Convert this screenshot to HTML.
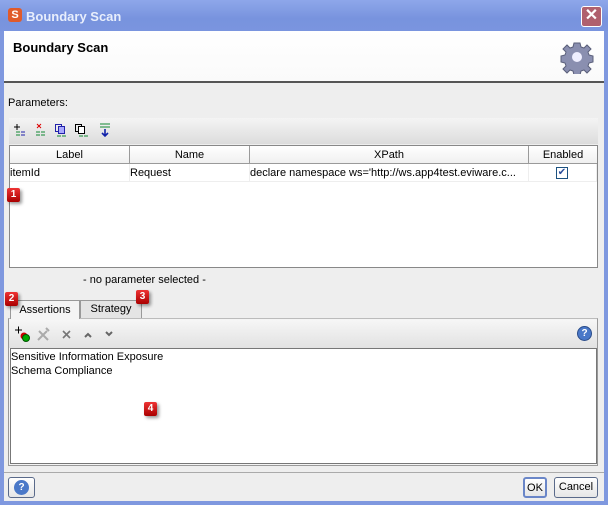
<!DOCTYPE html>
<html><head><meta charset="utf-8"><style>
*{margin:0;padding:0;box-sizing:border-box}
body{width:608px;height:505px;position:relative;overflow:hidden;font-family:"Liberation Sans",sans-serif;font-size:11px;color:#000;background:#7f98df}
.a{position:absolute}
.badge{position:absolute;width:13px;height:14px;background:linear-gradient(#e33,#a00);color:#fff;font-weight:bold;font-size:10px;text-align:center;line-height:14px;border-radius:2px;box-shadow:2px 2px 3px rgba(0,0,0,.4)}
.th{position:absolute;top:0;height:18px;line-height:18px;text-align:center;border-right:1px solid #9a9a9a;background:linear-gradient(#fff,#f0f0f0);border-bottom:1px solid #9a9a9a}
.td{position:absolute;top:18px;height:18px;line-height:18px;border-right:1px solid #eee;border-bottom:1px solid #eee;white-space:nowrap;overflow:hidden}
.btn{position:absolute;border:1px solid #5a6a8a;border-radius:3px;background:linear-gradient(#fff,#e6e6e6);text-align:center;line-height:18px}
</style></head><body>
<div class="a" style="left:0;top:0;width:608px;height:31px;background:linear-gradient(#8ea7ea,#7893de 60%,#7a95df)"></div>
<div class="a" style="left:8px;top:8px;width:14px;height:14px;background:#e05a2a;border-radius:3px;color:#fff;font-weight:bold;font-size:11px;line-height:14px;text-align:center">S</div>
<div class="a" style="left:26px;top:9px;color:#e8eefc;font-weight:bold;font-size:13px">Boundary Scan</div>
<div class="a" style="left:581px;top:6px;width:21px;height:21px;background:#b0606e;border:1px solid #fff;border-radius:3px;color:#fff;font-size:16px;line-height:18px;text-align:center;font-weight:bold">✕</div>
<div class="a" style="left:4px;top:31px;width:600px;height:470px;background:#eeeeee"></div>
<div class="a" style="left:4px;top:31px;width:600px;height:51px;background:linear-gradient(#fff,#fafafa)"></div>
<div class="a" style="left:4px;top:81px;width:600px;height:2px;background:#555"></div>
<div class="a" style="left:13px;top:40px;font-weight:bold;font-size:13px">Boundary Scan</div>
<svg class="a" style="left:560px;top:40px" width="34" height="34" viewBox="0 0 34 34"><g fill="#8a8fb0" stroke="#5a5f7a" stroke-width="1"><path d="M14 3h6l1 4 3 1 3-3 4 4-3 3 1 3 4 1v6l-4 1-1 3 3 3-4 4-3-3-3 1-1 4h-6l-1-4-3-1-3 3-4-4 3-3-1-3-4-1v-6l4-1 1-3-3-3 4-4 3 3 3-1z"/></g><circle cx="17" cy="17" r="5" fill="#eef"/></svg>
<div class="a" style="left:8px;top:97px">Parameters:</div>
<div class="a" style="left:9px;top:118px;width:589px;height:26px;background:linear-gradient(#f4f4f4,#dcdcdc)"></div>
<svg class="a" style="left:12px;top:122px" width="110" height="16" viewBox="0 0 110 16">
<g stroke-width="1">
<path d="M2 5h6M5 2v6" stroke="#000"/><path d="M4 10h4M9 10h4M4 13h4M9 13h4" stroke="#183"/><path d="M9 10h4M9 13h4" stroke="#22a"/>
<path d="M25 2l4 4M29 2l-4 4" stroke="#d00"/><path d="M24 10h4M29 10h4M24 13h4M29 13h4" stroke="#183"/>
<rect x="43.5" y="2.5" width="6" height="7" fill="none" stroke="#22a"/><rect x="46.5" y="4.5" width="6" height="7" fill="#aaf" stroke="#22a"/><path d="M45 14h4M50 14h4" stroke="#183"/>
<rect x="63.5" y="2.5" width="6" height="7" fill="none" stroke="#000"/><rect x="66.5" y="4.5" width="6" height="7" fill="#fff" stroke="#000"/><path d="M67 14h4M72 14h4" stroke="#183"/>
<path d="M88 2h10M88 5h10" stroke="#183"/><path d="M93 7v7M90 11l3 3 3-3" stroke="#12a" stroke-width="1.6" fill="none"/>
</g></svg>
<div class="a" style="left:9px;top:145px;width:589px;height:123px;background:#fff;border:1px solid #888">
<div class="th" style="left:0;width:120px">Label</div>
<div class="th" style="left:120px;width:120px">Name</div>
<div class="th" style="left:240px;width:279px">XPath</div>
<div class="th" style="left:519px;width:68px;border-right:none">Enabled</div>
<div class="td" style="left:0;width:120px">itemId</div>
<div class="td" style="left:120px;width:120px">Request</div>
<div class="td" style="left:240px;width:279px">declare namespace ws='http://ws.app4test.eviware.c...</div>
<div class="td" style="left:519px;width:68px"></div>
<div class="a" style="left:546px;top:21px;width:12px;height:12px;border:1px solid #1c5180;background:#fff;color:#2a4c9a;font-size:10px;line-height:10px;text-align:center">✔</div>
</div>
<div class="badge" style="left:7px;top:188px">1</div>
<div class="a" style="left:83px;top:274px">- no parameter selected -</div>
<div class="a" style="left:80px;top:300px;width:62px;height:18px;border:1px solid #999;border-bottom:none;background:#e4e4e4;text-align:center;line-height:17px">Strategy</div>
<div class="a" style="left:8px;top:318px;width:590px;height:148px;border:1px solid #999;border-top:1px solid #bbb;background:#f4f4f4"></div>
<div class="a" style="left:10px;top:300px;width:70px;height:19px;border:1px solid #999;border-bottom:none;background:#f4f4f4;text-align:center;line-height:18px">Assertions</div>
<div class="a" style="left:9px;top:320px;width:588px;height:28px;background:linear-gradient(#f6f6f6,#e2e2e2)"></div>
<svg class="a" style="left:13px;top:324px" width="110" height="20" viewBox="0 0 110 20">
<path d="M2 6h7M5.5 2.5v7" stroke="#000"/><circle cx="11" cy="12" r="3.5" fill="#c00"/><circle cx="13" cy="14" r="3.5" fill="#0a0" stroke="#050"/>
<path d="M25 16l9-9M26 7l9 9M33 4l3 3" stroke="#aaa" stroke-width="2"/>
<path d="M50 7l7 7M57 7l-7 7" stroke="#777" stroke-width="1.6"/>
<path d="M72 13l3-3 3 3" stroke="#666" stroke-width="2" fill="none"/>
<path d="M93 8l3 3 3-3" stroke="#666" stroke-width="2" fill="none"/>
</svg>
<div class="a" style="left:577px;top:326px;width:15px;height:15px;border-radius:50%;background:#4a78c8;border:1px solid #2a4c8a;color:#fff;font-size:10px;line-height:13px;text-align:center;font-weight:bold">?</div>
<div class="a" style="left:10px;top:348px;width:587px;height:116px;background:#fff;border:1px solid #777;line-height:14px;padding-top:1px">Sensitive Information Exposure<br>Schema Compliance</div>
<div class="badge" style="left:5px;top:292px">2</div>
<div class="badge" style="left:136px;top:290px">3</div>
<div class="badge" style="left:144px;top:402px">4</div>
<div class="a" style="left:4px;top:472px;width:600px;height:1px;background:#aaa"></div>
<div class="btn" style="left:8px;top:477px;width:27px;height:21px"><div style="margin:2px auto;width:15px;height:15px;border-radius:50%;background:#4a78c8;color:#fff;font-size:10px;line-height:15px;font-weight:bold">?</div></div>
<div class="btn" style="left:523px;top:477px;width:24px;height:21px;border:2px solid #6a86c8">OK</div>
<div class="btn" style="left:554px;top:477px;width:44px;height:21px">Cancel</div>
</body></html>
